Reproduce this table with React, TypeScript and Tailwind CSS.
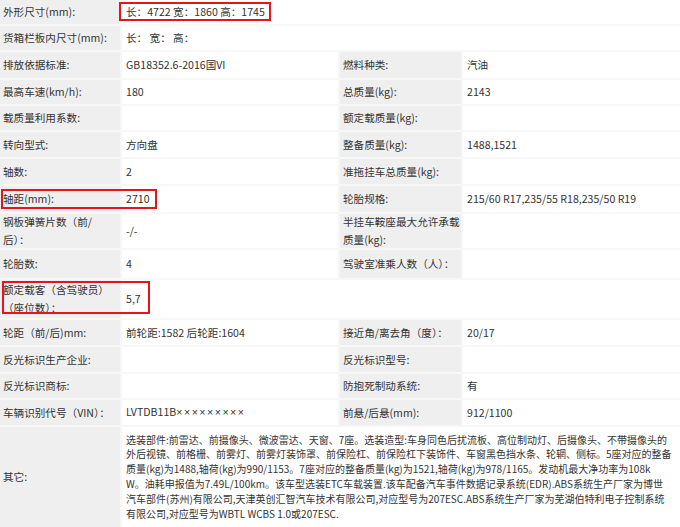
import { FC, ReactNode } from 'react'

const font = { fontFamily: '"Noto Sans CJK SC", "Noto Sans", sans-serif' }

const Label: FC<{ children?: ReactNode; className?: string }> = ({ children, className = '' }) => (
  <div className={`flex items-center whitespace-nowrap bg-[#efefef] pl-[3px] leading-[18px] ${className}`}>
    <div>{children}</div>
  </div>
)

const Value: FC<{ children?: ReactNode; className?: string }> = ({ children, className = '' }) => (
  <div className={`flex items-center whitespace-nowrap bg-white pl-1 ${className}`}>
    <div>{children}</div>
  </div>
)

const otherLines = [
  '选装部件:前雷达、前摄像头、微波雷达、天窗、7座。选装造型:车身同色后扰流板、高位制动灯、后摄像头、不带摄像头的',
  '外后视镜、前格栅、前雾灯、前雾灯装饰罩、前保险杠、前保险杠下装饰件、车窗黑色挡水条、轮辋、侧标。5座对应的整备',
  '质量(kg)为1488,轴荷(kg)为990/1153。7座对应的整备质量(kg)为1521,轴荷(kg)为978/1165。发动机最大净功率为108k',
  'W。油耗申报值为7.49L/100km。该车型选装ETC车载装置.该车配备汽车事件数据记录系统(EDR).ABS系统生产厂家为博世',
  '汽车部件(苏州)有限公司,天津英创汇智汽车技术有限公司,对应型号为207ESC.ABS系统生产厂家为芜湖伯特利电子控制系统',
  '有限公司,对应型号为WBTL WCBS 1.0或207ESC.',
]

export default function App() {
  return (
    <div className="relative h-[527px] w-[680px] overflow-hidden bg-white text-[10.6px] text-[#333]" style={font}>
      <div className="grid grid-cols-[120px_216px_121px_1fr] grid-rows-[24px_24px_26px_24px_24px_25px_25px_26px_34px_28px_38px_25px_25px_24px_25px_100px] gap-[2px] bg-[#f7f7f7]">
        <Label>外形尺寸(mm):</Label>
        <Value className="col-span-3">长：4722 宽：1860 高：1745</Value>

        <Label>货箱栏板内尺寸(mm):</Label>
        <Value className="col-span-3">长：&nbsp;宽：&nbsp;高：</Value>

        <Label>排放依据标准:</Label>
        <Value>GB18352.6-2016国VI</Value>
        <Label>燃料种类:</Label>
        <Value>汽油</Value>

        <Label>最高车速(km/h):</Label>
        <Value>180</Value>
        <Label>总质量(kg):</Label>
        <Value>2143</Value>

        <Label>载质量利用系数:</Label>
        <Value />
        <Label>额定载质量(kg):</Label>
        <Value />

        <Label>转向型式:</Label>
        <Value>方向盘</Value>
        <Label>整备质量(kg):</Label>
        <Value>1488,1521</Value>

        <Label>轴数:</Label>
        <Value>2</Value>
        <Label>准拖挂车总质量(kg):</Label>
        <Value />

        <Label>轴距(mm):</Label>
        <Value>2710</Value>
        <Label>轮胎规格:</Label>
        <Value>215/60 R17,235/55 R18,235/50 R19</Value>

        <Label>
          钢板弹簧片数（前/
          <br />
          后）：
        </Label>
        <Value>-/-</Value>
        <Label>
          半挂车鞍座最大允许承载
          <br />
          质量(kg):
        </Label>
        <Value />

        <Label>轮胎数:</Label>
        <Value>4</Value>
        <Label>驾驶室准乘人数（人）：</Label>
        <Value />

        <Label>
          额定载客（含驾驶员）
          <br />
          （座位数）：
        </Label>
        <Value className="col-span-3">5,7</Value>

        <Label>轮距（前/后)mm:</Label>
        <Value>前轮距:1582 后轮距:1604</Value>
        <Label>接近角/离去角（度）：</Label>
        <Value>20/17</Value>

        <Label>反光标识生产企业:</Label>
        <Value />
        <Label>反光标识型号:</Label>
        <Value />

        <Label>反光标识商标:</Label>
        <Value />
        <Label>防抱死制动系统:</Label>
        <Value>有</Value>

        <Label>车辆识别代号（VIN）：</Label>
        <Value>
          LVTDB11B
          <span className="font-['Liberation_Sans',sans-serif] tracking-[1.5px]">×××××××××</span>
        </Value>
        <Label>前悬/后悬(mm):</Label>
        <Value>912/1100</Value>

        <Label>其它:</Label>
        <Value className="col-span-3">
          <div className="text-[10px] leading-[14.8px]">
            {otherLines.map((line, i) => (
              <div key={i}>{line}</div>
            ))}
          </div>
        </Value>
      </div>

      {/* red highlight boxes */}
      <div className="absolute left-[119px] top-[2px] h-[19px] w-[152px] border-2 border-[#e8141c]" />
      <div className="absolute left-[1px] top-[189px] h-[20px] w-[156px] border-2 border-[#e8141c]" />
      <div className="absolute left-[2px] top-[281px] h-[33px] w-[148px] border-2 border-[#e8141c]" />
    </div>
  )
}
